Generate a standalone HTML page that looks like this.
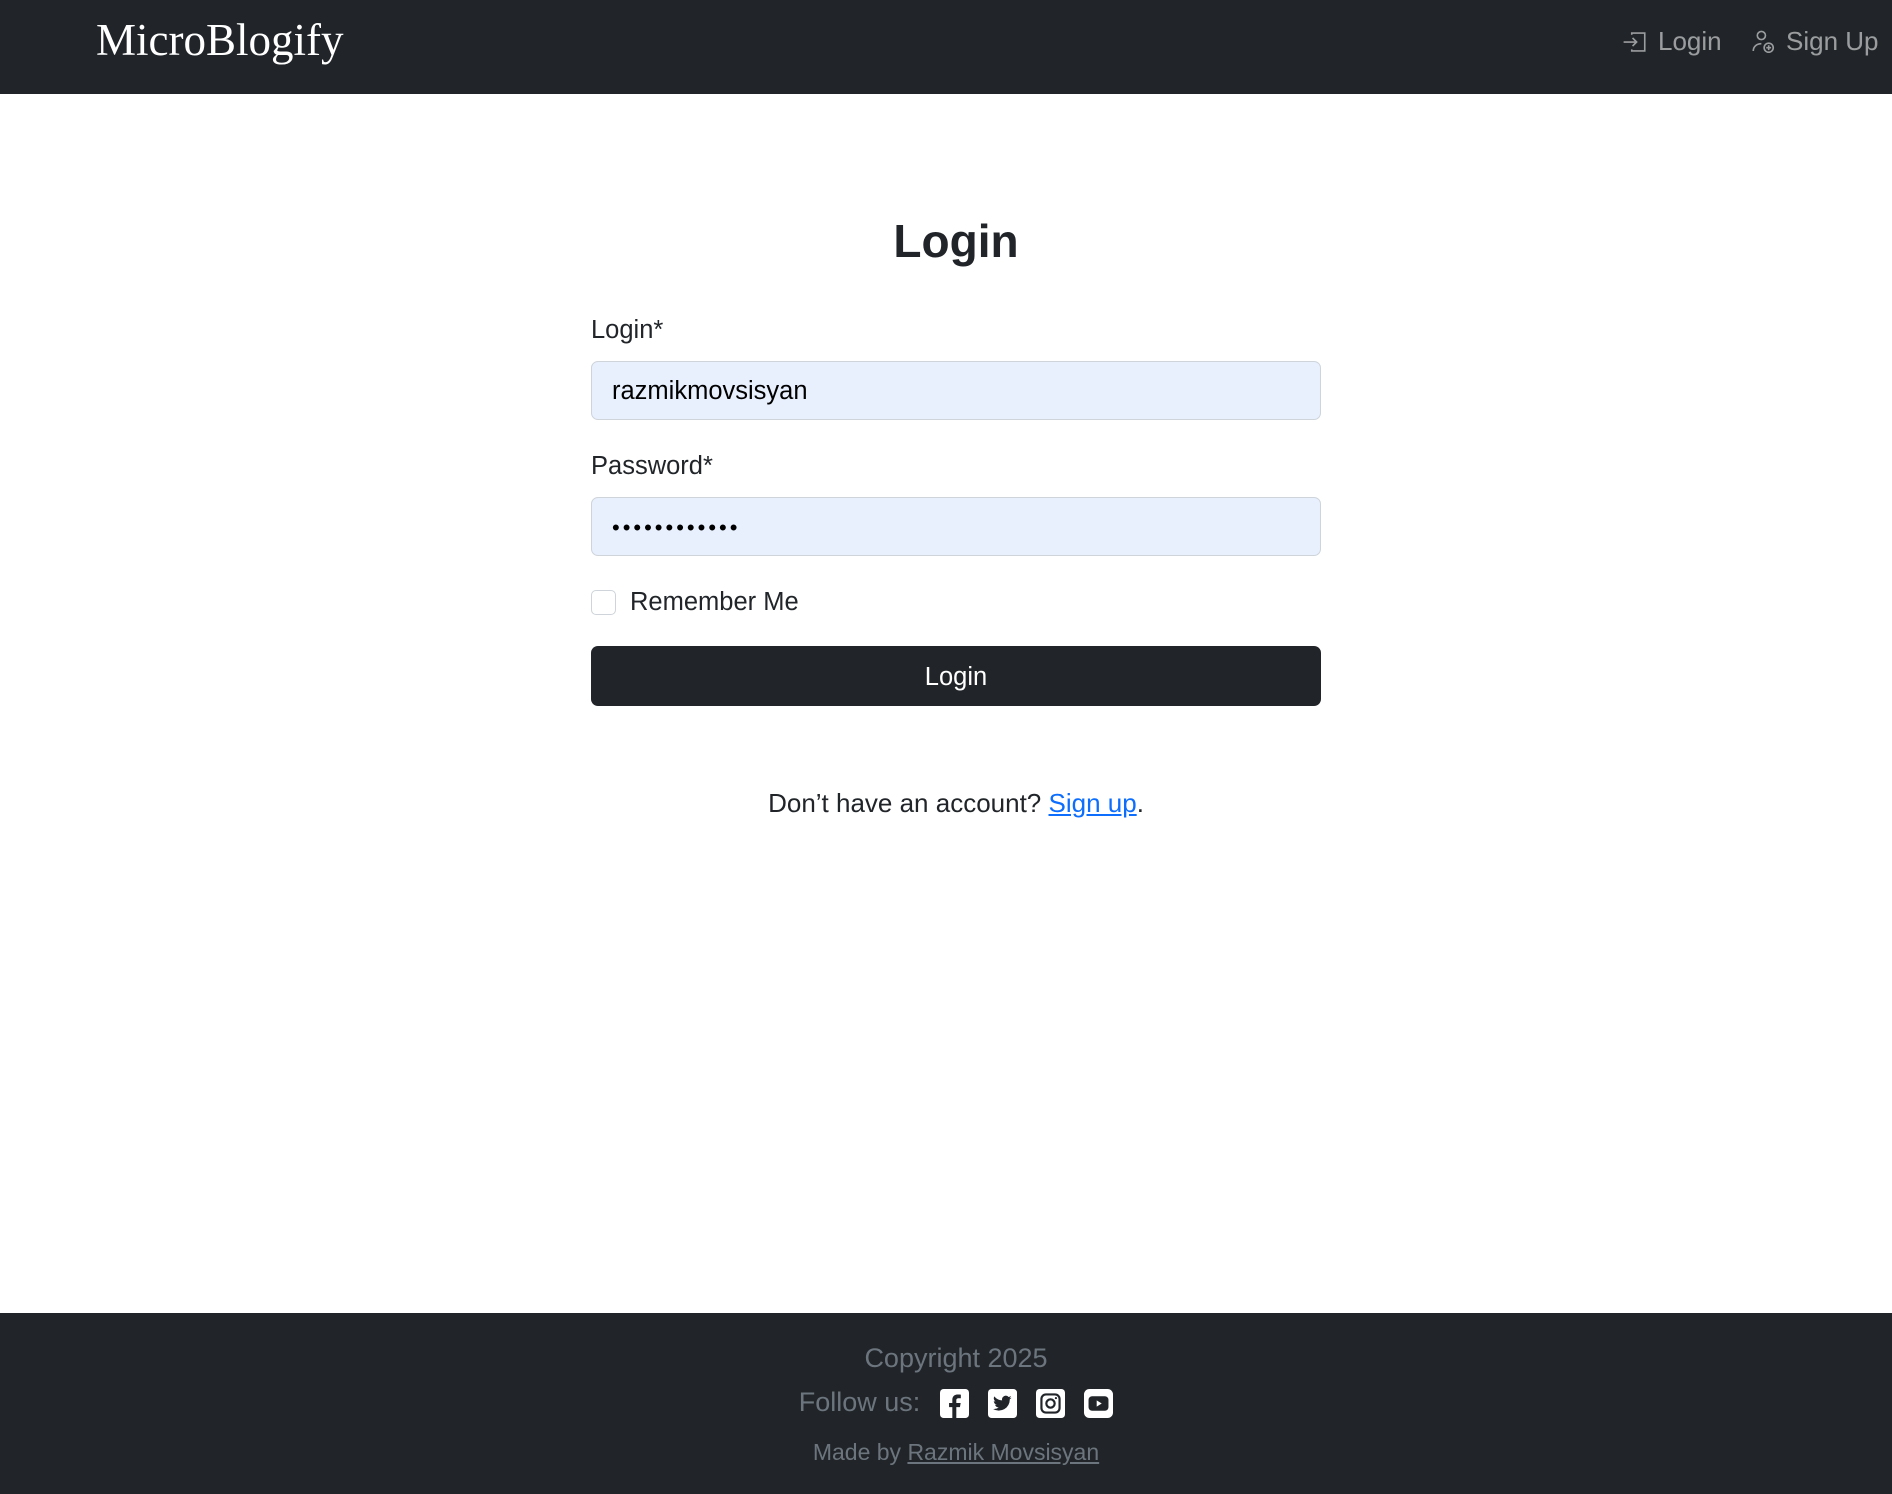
<!DOCTYPE html>
<html><head><meta charset="utf-8"><style>
*{box-sizing:border-box;margin:0;padding:0}
body{width:1892px;height:1494px;background:#fff;font-family:"Liberation Sans",sans-serif;color:#212529;position:relative;overflow:hidden;font-size:19.3px}
.nav{position:absolute;left:0;top:0;width:1892px;height:94px;background:#212529}
.brand{position:absolute;left:96px;top:14px;font-family:"Liberation Serif",serif;font-size:45px;color:#fff}
.nl{position:absolute;top:26px;font-size:26px;color:rgba(255,255,255,.55);display:flex;align-items:center;gap:10px}
h1{position:absolute;left:0;width:1912px;text-align:center;top:214px;font-size:46px;font-weight:bold}
.lbl{position:absolute;left:591px;font-size:25.5px}
.inp{position:absolute;left:591px;width:730px;height:59px;background:#e8f0fe;border:1px solid #ced4da;border-radius:7px;font-size:25.5px;padding:0 20px;line-height:59px;color:#000}
.cb{position:absolute;left:591px;top:590px;width:25px;height:25px;border:1px solid #ced4da;border-radius:5px}
.btn{position:absolute;left:591px;top:646px;width:730px;height:60px;background:#212529;border-radius:7px;color:#fff;font-size:25.5px;text-align:center;line-height:62px}
.txt{position:absolute;left:0;width:1912px;text-align:center;top:788px;font-size:26px}
.txt a{color:#0d6efd}
.foot{position:absolute;left:0;top:1313px;width:1892px;height:181px;background:#212529;color:#6c757d;text-align:center}
.foot>div{position:absolute;left:0;width:1912px}
.ic{display:inline-block;width:29px;height:29px;vertical-align:middle;margin-left:19px}
</style></head><body>
<div class="nav">
<div class="brand">MicroBlogify</div>
<div class="nl" style="left:1622px"><svg width="26" height="26" viewBox="0 0 16 16" fill="none" stroke="currentColor" stroke-width="1"><path d="M6 3.5V2.5h8v11H6v-1M1 8h8M6.5 5.5L9 8l-2.5 2.5"/></svg>Login</div>
<div class="nl" style="left:1750px"><svg width="26" height="26" viewBox="0 0 16 16" fill="none" stroke="currentColor" stroke-width="1"><circle cx="7" cy="4" r="2.5"/><path d="M2 13.5c0-3 2.5-4.5 5-4.5"/><circle cx="11.5" cy="11.5" r="2.8"/><path d="M11.5 10v3M10 11.5h3"/></svg>Sign Up</div>
</div>
<h1>Login</h1>
<div class="lbl" style="top:316px">Login*</div>
<div class="inp" style="top:361px">razmikmovsisyan</div>
<div class="lbl" style="top:452px">Password*</div>
<div class="inp" style="top:497px;letter-spacing:3px;font-size:22px">••••••••••••</div>
<div class="cb"></div>
<div class="lbl" style="left:630px;top:588px;font-size:25.5px">Remember Me</div>
<div class="btn">Login</div>
<div class="txt">Don’t have an account? <a href="#">Sign up</a>.</div>
<div class="foot">
<div style="top:30px;font-size:27px">Copyright 2025</div>
<div style="top:74px;font-size:27px">Follow us:<svg class="ic" style="margin-left:20px" viewBox="0 0 16 16"><rect width="16" height="16" rx="2" fill="#fff"/><path d="M9 16V10h2l.4-2.3H9V6.3c0-.7.3-1.2 1.3-1.2h1.2V3.1c-.4-.1-1-.1-1.7-.1-1.8 0-3 1-3 3v1.7H5V10h1.8v6z" fill="#212529"/></svg><svg class="ic" viewBox="0 0 16 16"><rect width="16" height="16" rx="2" fill="#fff"/><path d="M13 4.8c-.4.2-.8.3-1.2.3.4-.3.8-.7.9-1.2-.4.2-.9.4-1.3.5a2.1 2.1 0 0 0-3.6 1.9A6 6 0 0 1 3.5 4.1a2.1 2.1 0 0 0 .6 2.8c-.3 0-.7-.1-.9-.3 0 1 .7 1.9 1.7 2.1-.3.1-.6.1-1 0 .3.9 1.1 1.5 2 1.5A4.3 4.3 0 0 1 2.8 11a6 6 0 0 0 9.2-5.3c.4-.3.7-.6 1-.9z" fill="#212529"/></svg><svg class="ic" viewBox="0 0 16 16"><rect width="16" height="16" rx="2" fill="#fff"/><rect x="3" y="3" width="10" height="10" rx="2.5" fill="none" stroke="#212529" stroke-width="1.2"/><circle cx="8" cy="8" r="2.3" fill="none" stroke="#212529" stroke-width="1.2"/><circle cx="11" cy="5" r=".6" fill="#212529"/></svg><svg class="ic" viewBox="0 0 16 16"><rect width="16" height="16" rx="3" fill="#fff"/><rect x="2.5" y="4" width="11" height="8" rx="2" fill="#212529"/><path d="M7 6.3v3.4L9.8 8z" fill="#fff"/></svg></div>
<div style="top:126px;font-size:23px">Made by <u>Razmik Movsisyan</u></div>
</div>
</body></html>
